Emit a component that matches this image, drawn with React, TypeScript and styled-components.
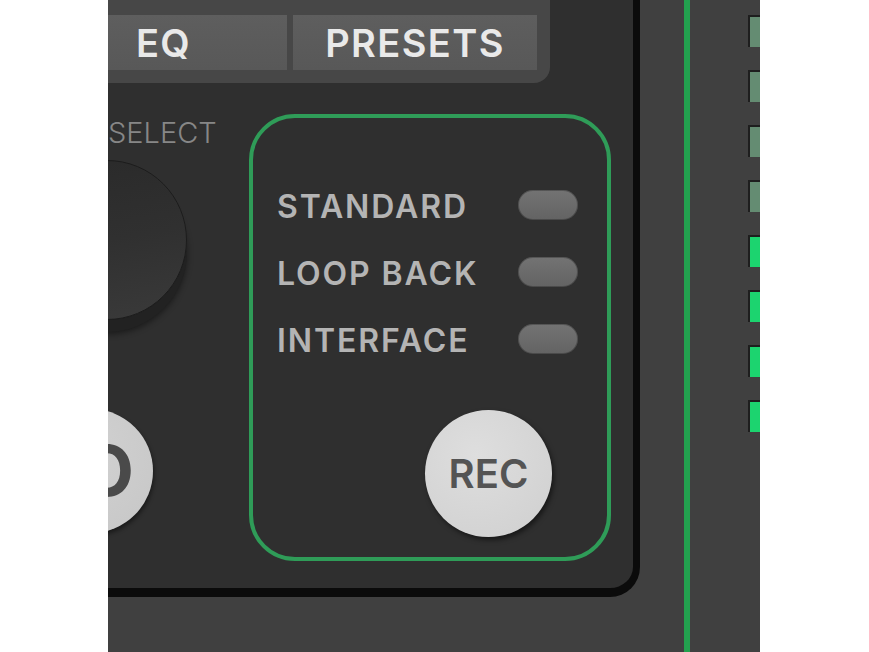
import React from 'react';
import styled, { createGlobalStyle } from 'styled-components';

const GlobalStyle = createGlobalStyle`
  html, body {
    margin: 0;
    padding: 0;
    background: #fff;
  }
  body {
    font-family: Inter, "Noto Sans", sans-serif;
  }
`;

const Stage = styled.div`
  display: flex;
  width: 869px;
  height: 652px;
  padding-left: 108px;
  box-sizing: border-box;
`;

const Device = styled.div`
  display: flex;
  align-items: flex-start;
  width: 652px;
  height: 652px;
  overflow: hidden;
  background: #404040;
`;

const Panel = styled.div`
  flex: none;
  display: flex;
  flex-direction: column;
  width: 640px;
  height: 597px;
  margin-left: -108px;
  box-sizing: border-box;
  background: #2f2f2f;
  border-right: 7px solid #0b0b0b;
  border-bottom: 9px solid #0b0b0b;
  border-bottom-right-radius: 30px;
`;

const Display = styled.div`
  display: grid;
  grid-template-columns: 247px 244px;
  gap: 6px;
  width: 522px;
  margin-left: 28px;
  padding: 15px 13px 13px 12px;
  box-sizing: border-box;
  background: #474747;
  border-bottom-right-radius: 16px;
`;

const Tab = styled.div`
  display: flex;
  align-items: center;
  justify-content: center;
  height: 55px;
  background: linear-gradient(#5e5e5e, #585858);
  color: #e9e9e9;
  font-size: 38px;
  font-weight: 600;
  letter-spacing: 1.4px;
  line-height: 1;
`;

const Body = styled.div`
  display: grid;
  grid-template-columns: 249px 362px;
  margin-top: 31px;
`;

const LeftColumn = styled.div`
  display: flex;
  flex-direction: column;
  align-items: flex-start;
`;

const SelectLabel = styled.div`
  margin: 4px 0 0 108px;
  color: #878787;
  font-size: 29px;
  font-weight: 300;
  letter-spacing: 0;
  line-height: 1;
`;

const Knob = styled.div`
  width: 160px;
  height: 160px;
  margin: 13px 0 0 27px;
  box-sizing: border-box;
  border-radius: 50%;
  border: 1px solid #1c1c1c;
  background: linear-gradient(170deg, #2a2a2a 0%, #303030 50%, #3a3a3a 100%);
  box-shadow: 0 12px 0 #222, 0 14px 6px rgba(0, 0, 0, 0.45);
`;

const RoundButton = styled.div`
  display: flex;
  align-items: center;
  justify-content: flex-end;
  width: 124px;
  height: 124px;
  margin: 89px 0 0 29px;
  padding-right: 19px;
  box-sizing: border-box;
  border-radius: 50%;
  background: radial-gradient(circle at 40% 35%, #d2d2d2, #c6c6c6);
  color: #4a4a4a;
  font-size: 70px;
  font-weight: 700;
  line-height: 1;
  box-shadow: 1px 3px 4px rgba(0, 0, 0, 0.45);
`;

const ModeBox = styled.div`
  display: flex;
  flex-direction: column;
  gap: 37px;
  height: 447px;
  padding: 72px 29px 20px 24px;
  box-sizing: border-box;
  border: 4px solid #2f9c58;
  border-radius: 46px;
`;

const ModeRow = styled.div`
  display: flex;
  align-items: center;
  justify-content: space-between;
  height: 30px;
`;

const ModeLabel = styled.span`
  padding-top: 4px;
  color: #b4b4b4;
  font-size: 32px;
  font-weight: 600;
  letter-spacing: 1.9px;
  line-height: 1;
`;

const Led = styled.span`
  width: 60px;
  height: 30px;
  border-radius: 15px;
  background: linear-gradient(#737373, #636363);
  box-shadow: inset 0 0 0 1px rgba(0, 0, 0, 0.25);
`;

const RecButton = styled.div`
  display: flex;
  align-items: center;
  justify-content: center;
  align-self: flex-end;
  width: 127px;
  height: 127px;
  margin-top: auto;
  margin-right: 26px;
  border-radius: 50%;
  background: radial-gradient(circle at 40% 35%, #dedede, #cfcfcf);
  color: #545454;
  font-size: 40px;
  font-weight: 600;
  line-height: 1;
  box-shadow: 2px 3px 5px rgba(0, 0, 0, 0.5);
`;

const Rail = styled.div`
  flex: none;
  width: 6px;
  height: 652px;
  margin-left: 44px;
  background: #23a14f;
`;

const Meter = styled.div`
  display: flex;
  flex-direction: column;
  gap: 23px;
  padding: 15px 0 0 58px;
`;

const Segment = styled.span<{ $lit: boolean }>`
  width: 24px;
  height: 32px;
  box-sizing: border-box;
  border-top: 2px solid #1e1e1e;
  border-left: 2px solid #1e1e1e;
  background: ${(p) => (p.$lit ? '#1cd46f' : '#648c72')};
`;

const modes = ['STANDARD', 'LOOP BACK', 'INTERFACE'];
const segments = [false, false, false, false, true, true, true, true];

export default function App() {
  return (
    <>
      <GlobalStyle />
      <Stage>
        <Device>
          <Panel>
            <Display>
              <Tab>EQ</Tab>
              <Tab>PRESETS</Tab>
            </Display>
            <Body>
              <LeftColumn>
                <SelectLabel>SELECT</SelectLabel>
                <Knob />
                <RoundButton>O</RoundButton>
              </LeftColumn>
              <ModeBox>
                {modes.map((m) => (
                  <ModeRow key={m}>
                    <ModeLabel>{m}</ModeLabel>
                    <Led />
                  </ModeRow>
                ))}
                <RecButton>REC</RecButton>
              </ModeBox>
            </Body>
          </Panel>
          <Rail />
          <Meter>
            {segments.map((lit, i) => (
              <Segment key={i} $lit={lit} />
            ))}
          </Meter>
        </Device>
      </Stage>
    </>
  );
}
